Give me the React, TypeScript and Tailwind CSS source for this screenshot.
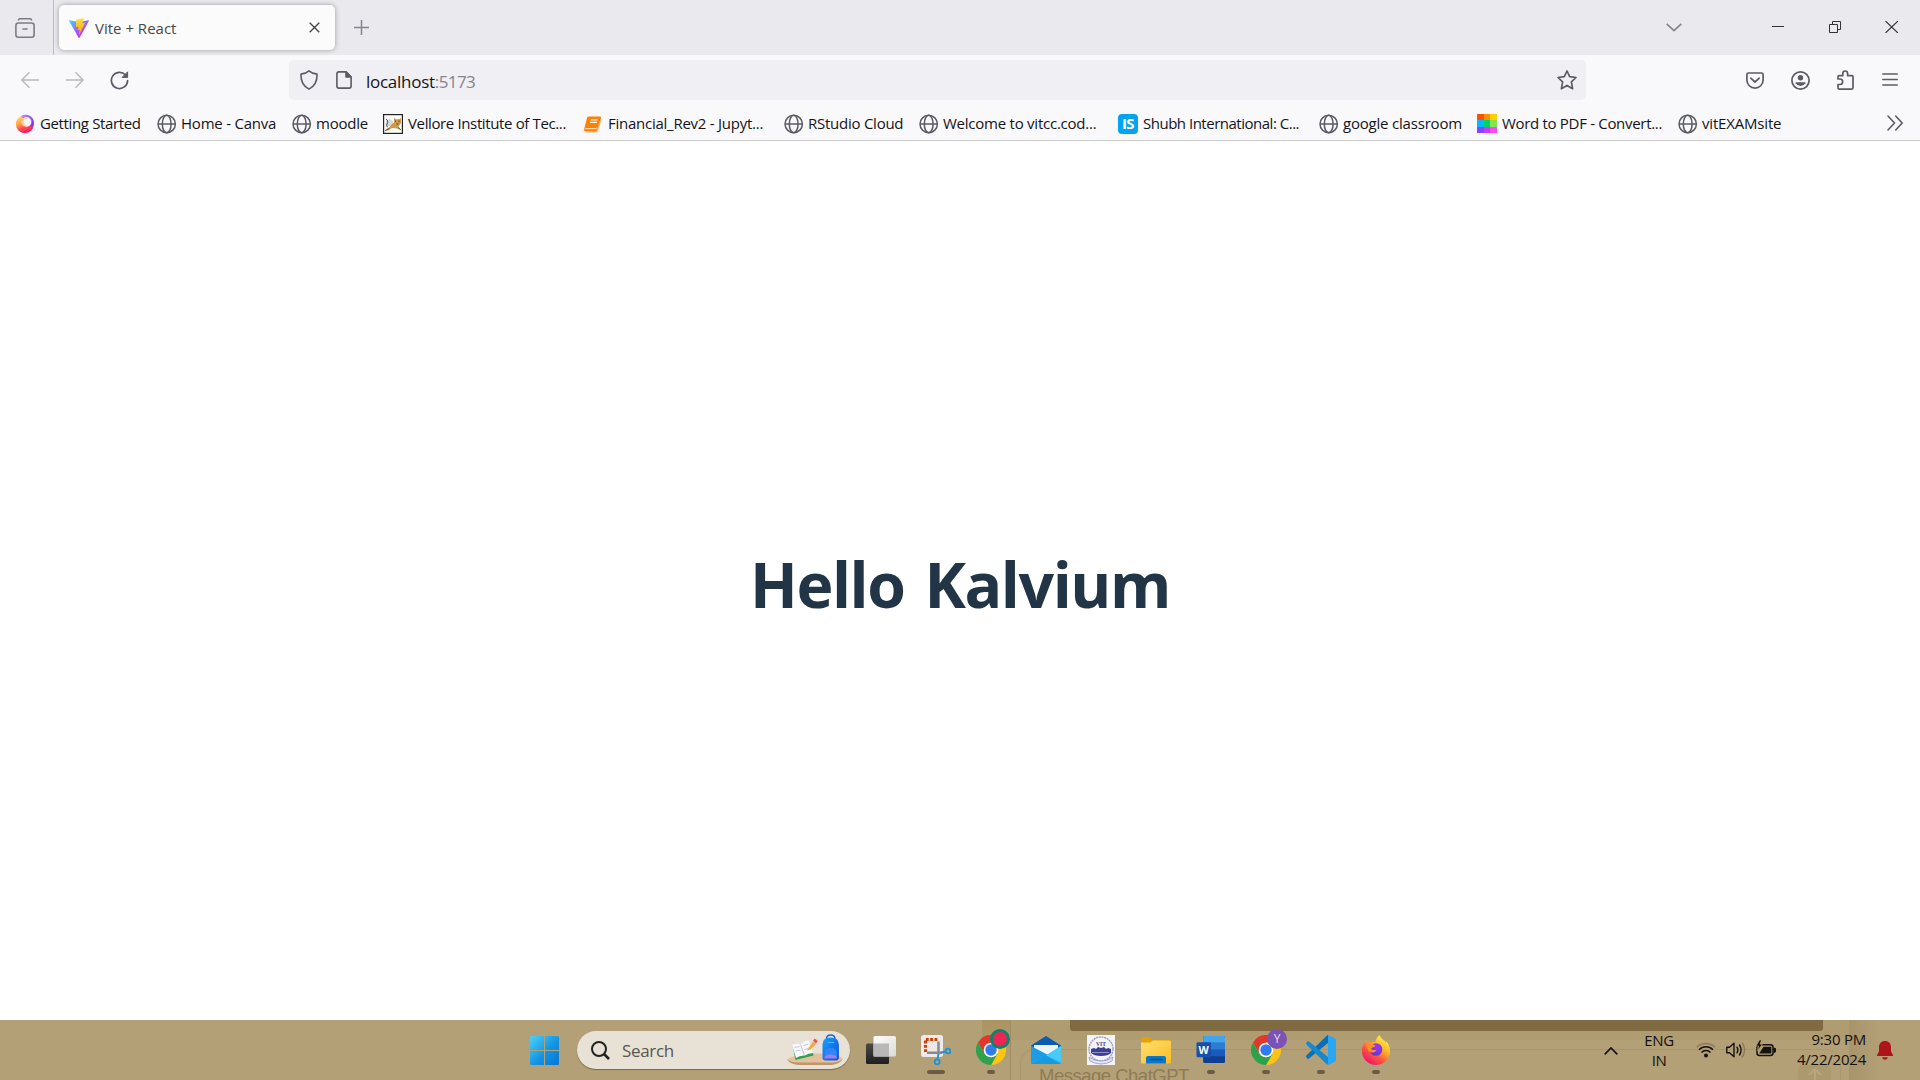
import type { ReactNode } from "react";

const toolbarStroke = {
  fill: "none",
  stroke: "#5b5b66",
  strokeWidth: 1.7,
  strokeLinecap: "round",
  strokeLinejoin: "round",
} as const;

function Globe() {
  return (
    <svg width="20" height="20" viewBox="0 0 20 20" fill="none" stroke="#5b5b66" strokeWidth="1.5">
      <circle cx="9.7" cy="10" r="8.7" />
      <ellipse cx="9.7" cy="10" rx="4.4" ry="8.7" />
      <path d="M1 10h17.4" />
    </svg>
  );
}

function FirefoxSwirl() {
  return (
    <svg width="20" height="20" viewBox="0 0 20 20">
      <defs>
        <linearGradient id="swirl" x1="0.2" y1="0.1" x2="0.5" y2="1">
          <stop offset="0" stopColor="#ffd567" />
          <stop offset="0.4" stopColor="#ffa04a" />
          <stop offset="0.75" stopColor="#ff3f55" />
          <stop offset="1" stopColor="#f5156c" />
        </linearGradient>
        <linearGradient id="swirlTop" x1="0" y1="0" x2="1" y2="0.6">
          <stop offset="0" stopColor="#c98bff" />
          <stop offset="1" stopColor="#7b3df0" />
        </linearGradient>
      </defs>
      <circle cx="9.900" cy="10.200" r="9" fill="url(#swirl)" />
      <path d="M6 2C11-.8 18.500 1.500 18.900 8.500c.1 2.300-.8 4-2.200 5z" fill="url(#swirlTop)" />
      <circle cx="11.500" cy="7.900" r="4.900" fill="#fdf1fa" />
      <path d="M6.500 6c1.500-2.500 5-3 7-1.500-3-.3-4.800.8-5 3-.2 2 1.200 3.600 3.500 4.300-3.500.5-7-2-5.500-5.800z" fill="#ffc46b" opacity=".8" />
    </svg>
  );
}

function TigerIcon() {
  return (
    <svg width="20" height="20" viewBox="0 0 20 20">
      <rect x=".6" y=".6" width="18.800" height="18.800" fill="#fff" stroke="#222" strokeWidth="1.200" />
      <path d="M3 12c-1-4 1-7 4-7l3 2v5z" fill="#d8dade" />
      <path d="M2 16.500l4-3 3-3.500 2-1.500V4l2 1.300h3L18 4v5l-2.500 3.500 2.500 3.500-4-1.500-5-.5-4 2.500z" fill="#cf9a4a" />
      <path d="M2 16.500l4.500-2M12.500 6.500v1.500M16 6.500v1.500M13.500 10h2M15 13.500l3 2.500" stroke="#4a3213" strokeWidth=".8" />
      <path d="M3 5c2 1 2 3 1 5s0 3 1 3" fill="none" stroke="#333" strokeWidth=".9" />
    </svg>
  );
}

function BookIcon() {
  return (
    <svg width="20" height="20" viewBox="0 0 20 20">
      <path d="M5.500 2.500h11.500q1.500 0 1 1.600l-3.500 11.500q-.5 1.900-2.300 1.900H2.500q-2-.4-1.300-2.500L4 4q.4-1.500 1.500-1.500z" fill="#ff7f00" />
      <path d="M7.700 5.800h7M6.900 8.400h7" stroke="#fff" strokeWidth="1.200" />
      <path d="M2.200 14.600h10.200q1 0 1.300-1" stroke="#ffd3a3" strokeWidth="1.300" fill="none" />
      <path d="M18 4.500L14.800 15.500q-.6 2.300-2.500 2.300H3.500" stroke="#ffb061" strokeWidth="1.200" fill="none" />
    </svg>
  );
}

function IsIcon() {
  return (
    <div className="flex h-5 w-5 items-center justify-center rounded-[4px] bg-[#03a4ef] text-[15px] leading-none font-bold tracking-[-0.5px] text-white">
      IS
    </div>
  );
}

function ColorGrid() {
  return (
    <div className="grid h-5 w-5 grid-cols-3 grid-rows-3">
      <div className="bg-[#ff5200]" />
      <div className="bg-[#ff8f00]" />
      <div className="bg-[#ffd000]" />
      <div className="bg-[#00b9ff]" />
      <div className="bg-[#00d267]" />
      <div className="bg-[#82e650]" />
      <div className="bg-[#8745ff]" />
      <div className="bg-[#c83cff]" />
      <div className="bg-[#ff46fb]" />
    </div>
  );
}

function ViteLogo() {
  return (
    <svg width="20" height="20" viewBox="0 0 256 257">
      <defs>
        <linearGradient id="viteA" x1="-.8%" x2="57.600%" y1="7.600%" y2="78.400%">
          <stop offset="0%" stopColor="#41D1FF" />
          <stop offset="100%" stopColor="#BD34FE" />
        </linearGradient>
        <linearGradient id="viteB" x1="43.400%" x2="50.300%" y1="2.200%" y2="89%">
          <stop offset="0%" stopColor="#FFEA83" />
          <stop offset="8.300%" stopColor="#FFDD35" />
          <stop offset="100%" stopColor="#FFA800" />
        </linearGradient>
      </defs>
      <path fill="url(#viteA)" d="M255.153 37.938L134.897 252.976c-2.483 4.440-8.862 4.466-11.382.048L.875 37.958c-2.746-4.814 1.371-10.646 6.827-9.670l120.385 21.517a6.537 6.537 0 0 0 2.322-.004l117.867-21.483c5.438-.991 9.574 4.796 6.877 9.620Z" />
      <path fill="url(#viteB)" d="M185.432.063L96.440 17.501a3.268 3.268 0 0 0-2.634 3.014l-5.474 92.456a3.268 3.268 0 0 0 3.997 3.378l24.777-5.718c2.318-.535 4.413 1.507 3.936 3.838l-7.361 36.047c-.495 2.426 1.782 4.500 4.151 3.780l15.304-4.649c2.372-.720 4.652 1.360 4.150 3.788l-11.698 56.621c-.732 3.542 3.979 5.473 5.943 2.437l1.313-2.028l72.516-144.720c1.215-2.423-.880-5.186-3.540-4.672l-25.505 4.922c-2.396.462-4.435-1.770-3.759-4.114l16.646-57.705c.677-2.350-1.370-4.583-3.769-4.113Z" />
    </svg>
  );
}

const bookmarks: { label: string; box: string; text: string; icon: ReactNode }[] = [
  { label: "Getting Started", box: "w-[142px] gap-[5px]", text: "tracking-[-0.36px]", icon: <FirefoxSwirl /> },
  { label: "Home - Canva", box: "w-[135px] gap-1", text: "tracking-[-0.22px]", icon: <Globe /> },
  { label: "moodle", box: "w-[91px] gap-1", text: "tracking-[-0.22px]", icon: <Globe /> },
  { label: "Vellore Institute of Tec...", box: "w-[200px] gap-[5px]", text: "tracking-[-0.37px]", icon: <TigerIcon /> },
  { label: "Financial_Rev2 - Jupyt...", box: "w-[201px] gap-[5px]", text: "tracking-[-0.25px]", icon: <BookIcon /> },
  { label: "RStudio Cloud", box: "w-[135px] gap-1", text: "tracking-[-0.25px]", icon: <Globe /> },
  { label: "Welcome to vitcc.cod...", box: "w-[199px] gap-1", text: "tracking-[-0.24px]", icon: <Globe /> },
  { label: "Shubh International: C...", box: "w-[201px] gap-[5px]", text: "tracking-[-0.49px]", icon: <IsIcon /> },
  { label: "google classroom", box: "w-[158px] gap-1", text: "tracking-[-0.2px]", icon: <Globe /> },
  { label: "Word to PDF - Convert...", box: "w-[201px] gap-[5px]", text: "tracking-[-0.31px]", icon: <ColorGrid /> },
  { label: "vitEXAMsite", box: "w-[130px] gap-1", text: "tracking-[-0.18px]", icon: <Globe /> },
];

function TabStrip() {
  return (
    <div className="flex h-[55px] shrink-0 bg-[#eae9ee]">
      <div className="flex w-[54px] items-center border-r border-[#bdbdc3] pl-[15px]">
        <svg width="20" height="20" viewBox="0 0 20 20" fill="none" stroke="#7c7c85" strokeWidth="1.600" strokeLinecap="round">
          <path d="M3.500 1.800Q4 .8 5.200.8h9.600q1.200 0 1.700 1" />
          <rect x=".9" y="5" width="18.200" height="14.200" rx="2.500" />
          <path d="M8 11h4" />
        </svg>
      </div>
      <div className="mt-[5px] ml-[5px] flex h-[45px] w-[276px] items-center rounded-[5px] bg-[#fbfbfb] pl-[10px] shadow-[0_0_5px_rgba(0,0,0,0.35)]">
        <ViteLogo />
        <span className="ml-[6px] flex-1 pt-px text-[15px] text-[#48484c]">Vite + React</span>
        <svg className="mr-[15px]" width="11" height="11" viewBox="0 0 11 11" stroke="#3f3f44" strokeWidth="1.300">
          <path d="M.7.7l9.600 9.600M10.300.7L.7 10.300" />
        </svg>
      </div>
      <div className="ml-[19px] flex flex-1 items-center">
        <svg width="15" height="15" viewBox="0 0 15 15" stroke="#85858b" strokeWidth="1.500">
          <path d="M7.500 0v15M0 7.500h15" />
        </svg>
      </div>
      <div className="flex items-center pr-[21px] pb-px">
        <svg className="mr-[90px]" width="16" height="9" viewBox="0 0 16 9" fill="none" stroke="#85858b" strokeWidth="1.600">
          <path d="M.7.9L8 7.700 15.300.9" />
        </svg>
        <svg className="mr-[45px]" width="12" height="12" viewBox="0 0 12 12" stroke="#333" strokeWidth="1">
          <path d="M0 5.500h12" />
        </svg>
        <svg className="mr-[44px]" width="12" height="12" viewBox="0 0 12 12" fill="none" stroke="#333" strokeWidth="1">
          <path d="M.5 3.500h8v8h-8zM3.500 3.500v-3h8v8h-3" />
        </svg>
        <svg width="14" height="12" viewBox="0 0 14 12" stroke="#333" strokeWidth="1.100">
          <path d="M.5 0l12.400 12M12.900 0L.5 12" />
        </svg>
      </div>
    </div>
  );
}

function NavBar() {
  return (
    <div className="mb-[2px] flex h-[50px] shrink-0 items-center">
      <svg className="ml-[21px]" width="18" height="16" viewBox="0 0 18 16" fill="none" stroke="#b9b9bf" strokeWidth="1.500" strokeLinecap="round" strokeLinejoin="round">
        <path d="M8 .8L.9 8 8 15.200M1 8h16.500" />
      </svg>
      <svg className="ml-[27px]" width="18" height="16" viewBox="0 0 18 16" fill="none" stroke="#b9b9bf" strokeWidth="1.500" strokeLinecap="round" strokeLinejoin="round">
        <path d="M10 .8L17.100 8 10 15.200M17 8H.5" />
      </svg>
      <svg className="mt-px ml-[26px]" width="19" height="19" viewBox="0 0 19 19" {...toolbarStroke}>
        <path d="M15.500 4A8.100 8.100 0 1 0 17.600 9.500" />
        <path d="M17.600 1.200v5.200h-5.200z" fill="#5b5b66" strokeWidth="1" />
      </svg>
      <div className="ml-40 flex h-10 w-[1297px] items-center rounded-[5px] bg-[#f0eff4] pl-[11px] pr-[9px]">
        <svg width="18" height="20" viewBox="0 0 18 20" {...toolbarStroke} strokeWidth={1.6}>
          <path d="M9 .9C6.800 2.900 4 3.700 1.700 3.900q-.8.1-.8.9C.9 12 3.500 16.500 9 19.100c5.500-2.600 8.100-7.100 8.100-14.300q0-.8-.8-.9C14 3.700 11.200 2.900 9 .9z" />
        </svg>
        <svg className="ml-[18px]" width="16" height="18" viewBox="0 0 16 18" {...toolbarStroke} strokeWidth={1.6}>
          <path d="M3 .9h7.200L15.100 6v9q0 2.100-2.100 2.100H3Q.9 17.100.9 15V3Q.9.9 3 .9z" />
          <path d="M10 1v5h5z" fill="#5b5b66" />
        </svg>
        <div className="ml-[14px] flex-1 pt-[4px] text-[17px] text-[#15141a]">
          <span className="tracking-[-0.27px]">localhost</span>
          <span className="tracking-[-0.6px] text-[#85858b]">:5173</span>
        </div>
        <svg width="20" height="20" viewBox="0.500 0 20 20" {...toolbarStroke}>
          <path d="M10.500 1l2.700 5.700 6.300.8-4.600 4.300 1.200 6.900-5.600-3.300-5.600 3.300 1.200-6.900L1.500 7.500l6.300-.8z" />
        </svg>
      </div>
      <div className="ml-40 flex items-center">
        <svg width="18" height="17" viewBox="0 0 18 17" {...toolbarStroke}>
          <path d="M2.500 1h13q1.600 0 1.600 1.600V8a8.100 8.100 0 0 1-16.200 0V2.600Q.9 1 2.500 1zM4.800 6.200L9 10l4.200-3.800" />
        </svg>
        <svg className="mt-px ml-[27px]" width="19" height="19" viewBox="0 0 19 19" {...toolbarStroke}>
          <circle cx="9.500" cy="9.500" r="8.600" />
          <circle cx="9.500" cy="6.800" r="2.700" fill="#5b5b66" stroke="none" />
          <path d="M5 11.300h9q.8.200.4 1Q12.800 15 9.500 15t-4.900-2.700q-.4-.8.400-1z" fill="#5b5b66" stroke="none" />
        </svg>
        <svg className="ml-[27px]" width="17" height="20" viewBox="0 0 17 20" {...toolbarStroke}>
          <path d="M1 9V6.800q0-1.200 1.200-1.200h3.600V3.400a2.400 2.400 0 0 1 4.800 0v2.200h4.200q1.200 0 1.200 1.200v11q0 1.300-1.200 1.300H2.200Q1 19.100 1 17.800v-3.300h1.900a2.700 2.700 0 0 0 0-5.500z" />
        </svg>
        <svg className="mb-px ml-[28px]" width="16" height="13" viewBox="0 0 16 13" {...toolbarStroke} strokeWidth={1.5}>
          <path d="M.8 1h14.400M.8 6.500h14.400M.8 12h14.400" />
        </svg>
      </div>
    </div>
  );
}

function BookmarksBar() {
  return (
    <div className="flex h-[34px] shrink-0 items-center border-b border-[#cccccc] pl-[15px] text-[15px] text-[#15141a]">
      {bookmarks.map((b) => (
        <div key={b.label} className={`flex shrink-0 items-center whitespace-nowrap ${b.box}`}>
          <span className="shrink-0">{b.icon}</span>
          <span className={b.text}>{b.label}</span>
        </div>
      ))}
      <svg className="mr-[17px] mb-px ml-auto" width="16" height="16" viewBox="0 0 16 16" {...toolbarStroke} strokeWidth={1.6}>
        <path d="M1 1l6.500 7L1 15M8.700 1l6.500 7-6.500 7" />
      </svg>
    </div>
  );
}

function Cell({ run, children }: { run?: "wide" | "dot"; children: ReactNode }) {
  return (
    <div className="relative flex h-[60px] w-[55px] flex-col items-center pt-[15px]">
      {children}
      {run === "wide" && <div className="mt-[5px] h-1 w-[18px] rounded-full bg-[#6a5d45]" />}
      {run === "dot" && <div className="mt-[5px] h-1 w-2 rounded-full bg-[#6a5d45]" />}
    </div>
  );
}

function Chrome() {
  return (
    <svg width="30" height="30" viewBox="0 0 30 30">
      <path d="M2 7.500A15 15 0 0 1 28 7.500H15L8.500 18.800z" fill="#e3372b" />
      <path d="M28 7.500A15 15 0 0 1 15 30l6.500-11.300L15 7.500z" fill="#fdc412" />
      <path d="M15 30A15 15 0 0 1 2 7.500l6.500 11.300 6.500 3.700 6.500-3.700z" fill="#2ea24a" />
      <circle cx="15" cy="15" r="7.300" fill="#fff" />
      <circle cx="15" cy="15" r="5.700" fill="#2f7cf0" />
    </svg>
  );
}

function SnippingTool() {
  return (
    <svg width="30" height="30" viewBox="0 0 30 30">
      <rect width="22" height="22" rx="2.500" fill="#ecebea" />
      <path d="M4.500 17V4.500H17" fill="none" stroke="#d83b01" strokeWidth="3" strokeDasharray="2.800 1.500" />
      <path d="M17.500 6.500v13M6 17.800h15" stroke="#868a90" strokeWidth="2.500" />
      <path d="M17.500 19l-1 5M20 17.500l5-1" stroke="#1c93d8" strokeWidth="1.800" />
      <circle cx="16.200" cy="26.800" r="2.500" fill="none" stroke="#1c93d8" strokeWidth="1.800" />
      <circle cx="27" cy="16" r="2.400" fill="none" stroke="#1c93d8" strokeWidth="1.800" />
    </svg>
  );
}

function VitCrest() {
  return (
    <svg width="28" height="30" viewBox="0 0 28 30">
      <rect width="28" height="30" fill="#f4f3f6" />
      <circle cx="14" cy="14" r="12" fill="none" stroke="#9fa0cc" strokeWidth="1.500" strokeDasharray="2 .7" />
      <text x="14" y="10.500" textAnchor="middle" fontSize="5.500" fontWeight="700" fontFamily="Liberation Serif, serif" fill="#3c3f92">VIT</text>
      <path d="M4 14l3-1 2 1 2-2 3 1 3-1 2 2 2-1 3 1v4q-3 3-10 3T4 18z" fill="#3c3f92" />
      <path d="M5 17.500h17" stroke="#8f91c8" />
      <path d="M2 22q5 4 12 4t12-4l-1 4q-5 3-11 3t-11-3z" fill="#e4e4f0" stroke="#8a8bc0" strokeWidth=".7" />
    </svg>
  );
}

function Firefox() {
  return (
    <svg width="30" height="30" viewBox="0 0 30 30">
      <defs>
        <linearGradient id="ffBody" x1=".85" y1=".1" x2=".25" y2=".95">
          <stop offset="0" stopColor="#fff04a" />
          <stop offset=".35" stopColor="#ffb52c" />
          <stop offset=".65" stopColor="#ff5a3c" />
          <stop offset="1" stopColor="#f0146e" />
        </linearGradient>
        <radialGradient id="ffGlobe" cx=".6" cy=".3" r=".8">
          <stop offset="0" stopColor="#a335f0" />
          <stop offset="1" stopColor="#4b3bd0" />
        </radialGradient>
      </defs>
      <path d="M18.500 0c1 2.500 2.500 3.500 4.500 5.500 1 .8 1.200 1.400 1.500 2.400l1-1.500c2.500 3 3.500 6 3.500 9.600A14 14 0 0 1 1 16c0-4.500 1.500-8 4-10.800l.8 3C7 7 8 7.300 9.500 7.500c1.800-.3 2.500-.6 5-.4C14.800 3.500 16.500 1.500 18.500 0z" fill="url(#ffBody)" />
      <circle cx="15" cy="14.500" r="6.300" fill="url(#ffGlobe)" />
      <path d="M5 8.500c3-1 6-.5 8 1.500l1.500.5c-.5 1.500-2 1.600-3.500 2.200-1 .7-.7 1.500.3 2 1.500.8 2.600-.2 4 .5-1 2.300-4 3-6.800 1.400C6.500 15.500 5 12.500 5 8.500z" fill="#ff8d24" />
    </svg>
  );
}

function SearchArt() {
  return (
    <svg width="58" height="32" viewBox="0 0 58 32">
      <defs>
        <linearGradient id="pack" x1="0" y1="0" x2="1" y2="1">
          <stop offset="0" stopColor="#1aa0ff" />
          <stop offset="1" stopColor="#0a50d8" />
        </linearGradient>
      </defs>
      <path d="M.5 25.500L14 19.500h32q6 1 11 5.500-3 4-10 5H12Q4 29 .5 25.500z" fill="#e3c19c" />
      <path d="M1 26q5 2.500 12 2.500h34q5 0 9.500-3Q53 30 46 31H13Q5 30.500 1 26z" fill="#c2946a" />
      <path d="M6.500 11.500l3 14.500 18-4.500-.5-2.500z" fill="#2f9e56" />
      <path d="M6 11q5-2 8.500-.5Q17.500 7 22.500 6l4.500 13q-5 0-8 2.500-5-.5-9 2.500z" fill="#f7f8fb" />
      <path d="M14.500 10.500l4 11M8.500 13.500l5-1M9.500 17l5-1M17.500 11.500l5-1.500M18.500 15.500l5-1.500" stroke="#b9bdd0" strokeWidth=".8" />
      <path d="M21.500 15.500l5.500-8 3 2.500-5.500 5.500-3.500 1z" fill="#f7a93b" />
      <path d="M27 6.500l1.800-2 3 2.500-2 2.500z" fill="#ef5350" />
      <path d="M40.500 5q0-4 4.200-4T49 5" fill="none" stroke="#1467d8" strokeWidth="1.500" />
      <path d="M36.500 23.500V10.500q0-7 8.200-7t8.200 7v13q0 3-3 3H39.500q-3 0-3-3z" fill="url(#pack)" />
      <path d="M38.500 22v-3q0-5 6.200-5t6.200 5v3z" fill="#2f86f4" />
      <path d="M38.500 22.500q6-4 12.400 0v2H38.500z" fill="#9d7df0" />
      <path d="M41.500 8.500h6.500" stroke="#4fb0ff" strokeWidth="1.200" />
    </svg>
  );
}

function Tray() {
  return (
    <div className="flex h-[60px] items-center text-[15px] leading-5 text-[#15120d]">
      <svg className="mr-[26px] mt-px" width="14" height="8" viewBox="0 0 14 8" fill="none" stroke="#15120d" strokeWidth="1.700">
        <path d="M.7 7.300L7 1l6.300 6.300" />
      </svg>
      <div className="w-[30px] text-center tracking-[-0.4px]">
        <div>ENG</div>
        <div>IN</div>
      </div>
      <svg className="ml-[22px]" width="20" height="16" viewBox="0 0 20 16" fill="none" strokeWidth="1.500">
        <path d="M.8 5.200A13 13 0 0 1 19.200 5.200" stroke="#8c7b58" />
        <path d="M3 7.800A9.800 9.800 0 0 1 17 7.800M5.500 10.400a6.300 6.300 0 0 1 9 0" stroke="#15120d" />
        <circle cx="10" cy="13.500" r="2" fill="#15120d" />
      </svg>
      <svg className="ml-[10px]" width="20" height="16" viewBox="0 0 20 16" fill="none" strokeWidth="1.400" stroke="#15120d" strokeLinejoin="round" strokeLinecap="round">
        <path d="M.8 5.300h2.700L8 1.300v13.400l-4.500-4H.8zM11 5.200q1.800 2.800 0 5.600M13.500 3q3.200 5 0 10" />
        <path d="M16.300 1q4.600 7 0 14" stroke="#8c7b58" />
      </svg>
      <svg className="mb-[3px] ml-[10px]" width="20" height="17" viewBox="0 0 20 17">
        <rect x="1" y="4.800" width="16" height="10.800" rx="2.500" fill="none" stroke="#15120d" strokeWidth="1.500" />
        <path d="M18 8v4.500l1.700-.8v-3z" fill="#15120d" stroke="#15120d" />
        <path d="M7.500 6.800h7.800v6.800H3.200z" fill="#15120d" />
        <path d="M3.500 0L0 6h2.500L1.500 10.500 6.500 4.200H4L5.500 0z" fill="#15120d" stroke="#b4a077" strokeWidth=".7" />
      </svg>
      <div className="ml-[20px] w-[70px] pb-[2px] text-right tracking-[-0.22px]">
        <div>9:30 PM</div>
        <div>4/22/2024</div>
      </div>
      <svg className="mr-[27px] ml-[11px]" width="16" height="19" viewBox="0 0 16 19" fill="#ae141c">
        <path d="M8 0c3.800 0 6 2.700 6 6v4.500l2 3.500v1H0v-1l2-3.500V6C2 2.700 4.200 0 8 0zM5 16.300h6q-.8 2.500-3 2.500t-3-2.500z" />
      </svg>
    </div>
  );
}

function TaskbarBackdrop() {
  return (
    <div className="absolute inset-0 overflow-hidden">
      <div className="absolute top-0 left-[982px] h-10 w-[29px] bg-gradient-to-b from-[#aa9461] to-[#b1a075]" />
      <div className="absolute top-0 left-[1010px] h-full w-px bg-[#a08d66]" />
      <div className="absolute top-0 left-[1011px] h-5 w-[838px] bg-[#b09c71]" />
      <div className="absolute top-0 left-[1849px] h-full w-8 bg-gradient-to-r from-[#a8946b] to-[#b4a077]" />
      <div className="absolute top-[29px] left-[1020px] h-[60px] w-[821px] rounded-[14px] border border-[#aa966c]" />
      <div className="absolute top-0 left-[1070px] h-[11px] w-[753px] rounded-b-[3px] bg-[#806a42]" />
      <div className="absolute top-[45px] left-[1798px] flex h-8 w-[33px] justify-center rounded-[5px] bg-[#ad996e] pt-[3px]">
        <svg width="14" height="14" viewBox="0 0 14 14" fill="none" stroke="#b9a67f" strokeWidth="2">
          <path d="M1 7l6-6 6 6M7 1v13" />
        </svg>
      </div>
      <div className="absolute top-[45px] left-[1039px] font-['Liberation_Sans',sans-serif] text-[18.5px] leading-[22px] tracking-[-0.5px] whitespace-nowrap text-[#8f7b53]">
        Message ChatGPT
      </div>
    </div>
  );
}

function Taskbar() {
  return (
    <div className="relative h-[60px] shrink-0 bg-[#b4a077]">
      <TaskbarBackdrop />
      <div className="relative flex h-full">
        <div className="ml-[530px] pt-4">
          <svg width="29" height="29" viewBox="0 0 29 29">
            <defs>
              <linearGradient id="win" gradientUnits="userSpaceOnUse" x1="0" y1="0" x2="29" y2="29">
                <stop offset="0" stopColor="#4fd0fb" />
                <stop offset=".55" stopColor="#1395e2" />
                <stop offset="1" stopColor="#0474d4" />
              </linearGradient>
            </defs>
            <path d="M1.500 0H14v14H0V1.500Q0 0 1.500 0zM15 0h12.500Q29 0 29 1.500V14H15zM0 15h14v14H1.500Q0 29 0 27.500zM15 15h14v12.500q0 1.500-1.500 1.500H15z" fill="url(#win)" />
          </svg>
        </div>
        <div className="mt-[11px] ml-[18px] flex h-[38px] w-[273px] items-center rounded-full bg-[#e8e1d6] pl-[14px] shadow-[0_1px_1px_rgba(90,70,30,0.6)]">
          <svg width="19" height="19" viewBox="0 0 19 19" fill="none" stroke="#222" strokeWidth="2">
            <circle cx="8" cy="8" r="7" />
            <path d="M13 13l5 5" strokeWidth="2.600" />
          </svg>
          <span className="ml-[12px] flex-1 pt-[2px] text-[17px] tracking-[-0.33px] text-[#5a564e]">Search</span>
          <SearchArt />
          <div className="w-[6px]" />
        </div>
        <div className="ml-[3.5px] flex">
          <Cell>
            <svg className="mt-px" width="30" height="28" viewBox="0 0 30 28">
              <defs>
                <linearGradient id="tvDark" x1="0" y1="0" x2="0" y2="1">
                  <stop offset="0" stopColor="#4a4947" />
                  <stop offset="1" stopColor="#1f1e1d" />
                </linearGradient>
                <linearGradient id="tvLight" x1="0" y1="0" x2="1" y2="1">
                  <stop offset="0" stopColor="#fff" />
                  <stop offset="1" stopColor="#dcdad7" />
                </linearGradient>
              </defs>
              <rect y="7.500" width="23" height="20.500" rx="1.500" fill="url(#tvDark)" />
              <rect x="7.500" width="22.500" height="20.500" rx="1.500" fill="url(#tvLight)" />
              <rect x="7.500" y="7.500" width="15.500" height="13" fill="#b9b8b6" />
            </svg>
          </Cell>
          <Cell run="wide">
            <SnippingTool />
          </Cell>
          <Cell run="dot">
            <Chrome />
            <div className="absolute top-[9px] left-[26px] h-5 w-5 rounded-full border-[3px] border-[#12806c] bg-[#ee2453]" />
          </Cell>
          <Cell>
            <svg className="mt-px" width="30" height="28" viewBox="0 0 30 28">
              <path d="M0 9.500L15 0l15 9.500V14H0z" fill="#0a5cb0" />
              <path d="M3 9h24v10H3z" fill="#eff3f7" />
              <path d="M0 10l15 9.500L30 10v18H0z" fill="#31b5f0" />
              <path d="M0 10v17.500L17 19z" fill="#1c9ce4" />
              <path d="M30 10v16L15 19.500z" fill="#45cdf8" />
              <path d="M0 28l15-8.500L30 28z" fill="#159be2" />
            </svg>
          </Cell>
          <Cell>
            <VitCrest />
          </Cell>
          <Cell>
            <svg className="mt-[2px]" width="30" height="27" viewBox="0 0 30 27">
              <defs>
                <linearGradient id="folder" x1="0" y1="0" x2="1" y2="1">
                  <stop offset="0" stopColor="#ffdf70" />
                  <stop offset="1" stopColor="#fcbd24" />
                </linearGradient>
              </defs>
              <path d="M0 7V1.500Q0 0 1.500 0H9l3 3h16.500Q30 3 30 4.500V8H0z" fill="#e3a008" />
              <path d="M0 5.500h9.500L12 3.500h16.500Q30 3.500 30 5v20q0 1.500-1.500 1.500h-27Q0 26.500 0 25z" fill="url(#folder)" />
              <path d="M5 26.500V21q0-2 2-2h16q2 0 2 2v5.500z" fill="#0a78c8" />
              <path d="M8.500 22.500h13" stroke="#054f8c" strokeWidth="1.500" />
            </svg>
          </Cell>
          <Cell run="dot">
            <svg className="mb-px pt-px" width="30" height="29" viewBox="0 0 30 29">
              <rect x="7" width="22.500" height="28" rx="1.500" fill="#185abd" />
              <path d="M7 7V1.500Q7 0 8.500 0H28q1.500 0 1.500 1.500V7z" fill="#41a5ee" />
              <path d="M7 7h22.500v7H7z" fill="#2b7cd3" />
              <path d="M7 21h22.500v5.500q0 1.500-1.500 1.500H8.500Q7 28 7 26.500z" fill="#103f91" />
              <rect y="6.500" width="15" height="15.500" rx="1.300" fill="#1650ae" />
              <text x="7.500" y="18.300" textAnchor="middle" fontSize="11" fontWeight="700" fontFamily="Open Sans, sans-serif" fill="#fff">W</text>
            </svg>
          </Cell>
          <Cell run="dot">
            <Chrome />
            <div className="absolute top-[9px] left-[28.5px] flex h-5 w-5 items-center justify-center rounded-full bg-[#7b52b5] text-[12px] leading-none text-[#e7dcf5]">
              Y
            </div>
          </Cell>
          <Cell run="dot">
            <svg width="30" height="30" viewBox="0 0 30 30">
              <path d="M22 0v8L3 23.500q-1 .6-1.800 0L.3 22q-.6-.8.3-1.700L20.500.9Q21.200 0 22 0z" fill="#0a6fb5" />
              <path d="M22 30v-8L3 6.500q-1-.6-1.800 0L.3 8q-.6.8.3 1.700l19.900 19.400q.7.9 1.500.9z" fill="#1489d0" />
              <path d="M22 0l6.500 3q1.500.7 1.500 2.300v19.400q0 1.600-1.500 2.300L22 30q-1 0-1.500-.9l1.500-.6z" fill="#2ba6f2" />
            </svg>
          </Cell>
          <Cell run="dot">
            <Firefox />
          </Cell>
        </div>
        <div className="ml-auto">
          <Tray />
        </div>
      </div>
    </div>
  );
}

export default function App() {
  return (
    <div className="flex h-screen w-full flex-col overflow-hidden bg-[#f9f9fb] font-['Open_Sans',sans-serif]">
      <TabStrip />
      <NavBar />
      <BookmarksBar />
      <main className="flex flex-1 items-center justify-center bg-white pt-[8px]">
        <h1 className="text-[62.5px] leading-[1.1] font-bold tracking-[-1.4px] text-[#213547] [word-spacing:5px]">Hello Kalvium</h1>
      </main>
      <Taskbar />
    </div>
  );
}
